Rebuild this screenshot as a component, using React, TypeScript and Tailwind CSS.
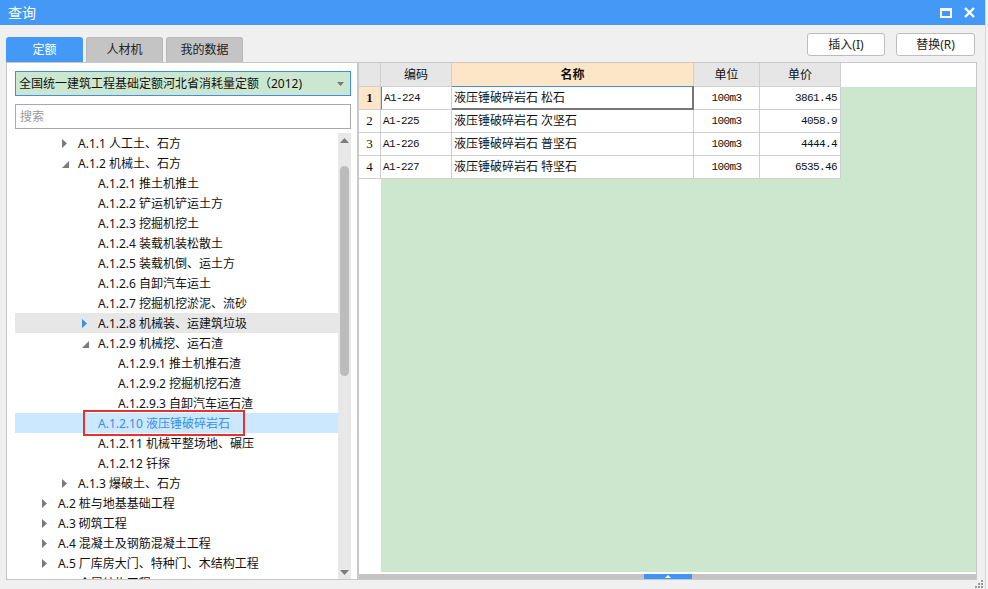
import React from "react";

type Node = { lvl: 1 | 2 | 3 | 4; arrow: "" | "c" | "e"; text: string; hover?: boolean; sel?: boolean };

const tree: Node[] = [
  { lvl: 2, arrow: "c", text: "A.1.1 人工土、石方" },
  { lvl: 2, arrow: "e", text: "A.1.2 机械土、石方" },
  { lvl: 3, arrow: "", text: "A.1.2.1 推土机推土" },
  { lvl: 3, arrow: "", text: "A.1.2.2 铲运机铲运土方" },
  { lvl: 3, arrow: "", text: "A.1.2.3 挖掘机挖土" },
  { lvl: 3, arrow: "", text: "A.1.2.4 装载机装松散土" },
  { lvl: 3, arrow: "", text: "A.1.2.5 装载机倒、运土方" },
  { lvl: 3, arrow: "", text: "A.1.2.6 自卸汽车运土" },
  { lvl: 3, arrow: "", text: "A.1.2.7 挖掘机挖淤泥、流砂" },
  { lvl: 3, arrow: "c", text: "A.1.2.8 机械装、运建筑垃圾", hover: true },
  { lvl: 3, arrow: "e", text: "A.1.2.9 机械挖、运石渣" },
  { lvl: 4, arrow: "", text: "A.1.2.9.1 推土机推石渣" },
  { lvl: 4, arrow: "", text: "A.1.2.9.2 挖掘机挖石渣" },
  { lvl: 4, arrow: "", text: "A.1.2.9.3 自卸汽车运石渣" },
  { lvl: 3, arrow: "", text: "A.1.2.10 液压锤破碎岩石", sel: true },
  { lvl: 3, arrow: "", text: "A.1.2.11 机械平整场地、碾压" },
  { lvl: 3, arrow: "", text: "A.1.2.12 钎探" },
  { lvl: 2, arrow: "c", text: "A.1.3 爆破土、石方" },
  { lvl: 1, arrow: "c", text: "A.2 桩与地基基础工程" },
  { lvl: 1, arrow: "c", text: "A.3 砌筑工程" },
  { lvl: 1, arrow: "c", text: "A.4 混凝土及钢筋混凝土工程" },
  { lvl: 1, arrow: "c", text: "A.5 厂库房大门、特种门、木结构工程" },
  { lvl: 1, arrow: "c", text: "A.6 金属结构工程" },
];

const indent: Record<number, string> = {
  1: "pl-[27px]",
  2: "pl-[47px]",
  3: "pl-[67px]",
  4: "pl-[87px]",
};

const rows = [
  { code: "A1-224", name: "液压锤破碎岩石 松石", unit: "100m3", price: "3861.45" },
  { code: "A1-225", name: "液压锤破碎岩石 次坚石", unit: "100m3", price: "4058.9" },
  { code: "A1-226", name: "液压锤破碎岩石 普坚石", unit: "100m3", price: "4444.4" },
  { code: "A1-227", name: "液压锤破碎岩石 特坚石", unit: "100m3", price: "6535.46" },
];

function Arrow({ kind, blue }: { kind: "" | "c" | "e"; blue?: boolean }) {
  return (
    <div className="w-[16px] h-full flex items-center">
      {kind === "c" && (
        <svg width="5" height="9" viewBox="0 0 5 9">
          <path d="M0 0 L5 4.5 L0 9 Z" fill={blue ? "#3a8ee6" : "#7b7b7b"} />
        </svg>
      )}
      {kind === "e" && (
        <svg width="7" height="7" viewBox="0 0 7 7" className="mt-[2px]">
          <path d="M7 0 L7 7 L0 7 Z" fill="#7b7b7b" />
        </svg>
      )}
    </div>
  );
}

const mono = "font-['Liberation_Mono','DejaVu_Sans_Mono',monospace] text-[11px] tracking-[-0.6px]";

export default function App() {
  return (
    <div className="w-[988px] h-[589px] bg-[#f0f0f0] flex overflow-hidden font-['Noto_Sans','Noto_Sans_CJK_SC',sans-serif] text-[#111]">
      <div className="w-[985px] h-full flex flex-col">
        {/* title bar */}
        <div className="h-[25px] bg-[#4499f7] flex items-center pl-[8px] pr-[10px]">
          <span className="text-white text-[14px] leading-none">查询</span>
          <div className="ml-auto flex items-center gap-[12px]">
            <svg width="12" height="10" viewBox="0 0 12 10">
              <rect x="1" y="1.5" width="10" height="7.5" fill="none" stroke="white" strokeWidth="2" />
              <rect x="0" y="0" width="12" height="3" fill="white" />
            </svg>
            <svg width="11" height="11" viewBox="0 0 11 11">
              <path d="M1 1 L10 10 M10 1 L1 10" stroke="white" strokeWidth="2.4" />
            </svg>
          </div>
        </div>

        {/* tabs + buttons */}
        <div className="h-[37px] flex">
          <div className="ml-[6px] flex items-end gap-[3px]">
            <div className="w-[77px] h-[25px] bg-[#4499f7] rounded-t-[3px] flex items-center justify-center text-white text-[12px]">定额</div>
            <div className="w-[77px] h-[25px] bg-[#c4c4c4] border border-[#b8b8b8] border-b-0 rounded-t-[3px] flex items-center justify-center text-[12px] text-[#222]">人材机</div>
            <div className="w-[77px] h-[25px] bg-[#c4c4c4] border border-[#b8b8b8] border-b-0 rounded-t-[3px] flex items-center justify-center text-[12px] text-[#222]">我的数据</div>
          </div>
          <div className="ml-auto mr-[10px] mt-[8px] flex gap-[11px] self-start">
            <div className="w-[78px] h-[23px] bg-white border border-[#bdbdbd] rounded-[3px] flex items-center justify-center text-[12px] text-[#222]">插入(I)</div>
            <div className="w-[79px] h-[23px] bg-white border border-[#bdbdbd] rounded-[3px] flex items-center justify-center text-[12px] text-[#222]">替换(R)</div>
          </div>
        </div>

        {/* panels */}
        <div className="h-[518px] flex">
          {/* left panel */}
          <div className="ml-[6px] w-[352px] h-full bg-white border border-[#c8c8c8] flex flex-col pl-[8px] pr-[6px] pt-[8px]">
            <div className="h-[25px] border border-[#3f8fe9] bg-[#cce7cf] flex items-center pl-[3px] pr-[6px]">
              <span className="text-[12px] whitespace-nowrap">全国统一建筑工程基础定额河北省消耗量定额（2012)</span>
              <svg width="7" height="4" viewBox="0 0 7 4" className="ml-auto">
                <path d="M0 0 L7 0 L3.5 4 Z" fill="#777" />
              </svg>
            </div>
            <div className="mt-[8px] h-[25px] border border-[#a9a9a9] flex items-center pl-[4px]">
              <span className="text-[12px] text-[#9a9a9a]">搜索</span>
            </div>
            <div className="mt-[4px] flex-1 flex min-h-0 overflow-hidden">
              <div className="flex-1 min-w-0">
                {tree.map((n, i) => (
                  <div
                    key={i}
                    className={`relative h-[20px] flex items-center whitespace-nowrap text-[12px] ${indent[n.lvl]} ${
                      n.hover ? "bg-[#e7e7e7]" : n.sel ? "bg-[#cce8ff] text-[#3a8ee6]" : ""
                    }`}
                  >
                    <Arrow kind={n.arrow} blue={n.hover} />
                    <span className="pt-[2px]">{n.text}</span>
                    {n.sel && (
                      <div className="absolute left-[68px] top-[-3px] w-[162px] h-[26px] border-2 border-[#e8302f]" />
                    )}
                  </div>
                ))}
              </div>
              <div className="w-[13px] bg-[#e8e8e8] flex flex-col items-center relative">
                <svg width="9" height="5" viewBox="0 0 9 5" className="mt-[5px]">
                  <path d="M0 5 L4.5 0 L9 5 Z" fill="#7b7b7b" />
                </svg>
                <div className="mt-[23px] w-[9px] h-[210px] rounded-full bg-[#bcbcbc]" />
                <svg width="9" height="5" viewBox="0 0 9 5" className="mt-auto mb-[4px]">
                  <path d="M0 0 L9 0 L4.5 5 Z" fill="#7b7b7b" />
                </svg>
              </div>
            </div>
          </div>

          {/* grid */}
          <div className="w-[619px] h-full bg-white border border-[#c8c8c8] flex flex-col">
            <div className="h-[24px] flex text-[12px]">
              <div className="w-[22px] bg-[#e6e6e6] border-r border-b border-[#cfcfcf]" />
              <div className="w-[71px] bg-[#e6e6e6] border-r border-b border-[#cfcfcf] flex items-center justify-center">编码</div>
              <div className="w-[242px] bg-[#fde6c8] border-r border-b border-[#cfcfcf] flex items-center justify-center font-bold">名称</div>
              <div className="w-[66px] bg-[#e6e6e6] border-r border-b border-[#cfcfcf] flex items-center justify-center">单位</div>
              <div className="w-[81px] bg-[#e6e6e6] border-r border-b border-[#cfcfcf] flex items-center justify-center">单价</div>
              <div className="flex-1 bg-white" />
            </div>
            <div className="flex-1 flex min-h-0">
              <div className="w-[22px] bg-white flex flex-col font-['Liberation_Serif',serif] text-[13px]">
                {rows.map((_, i) => (
                  <div
                    key={i}
                    className={`h-[23px] border-r border-b border-[#cfcfcf] flex items-center justify-center ${
                      i === 0 ? "bg-[#fde6c8] font-bold" : ""
                    }`}
                  >
                    {i + 1}
                  </div>
                ))}
              </div>
              <div className="flex-1 bg-[#cde7cf] flex flex-col">
                {rows.map((r, i) => (
                  <div key={i} className="h-[23px] flex">
                    <div
                      className={`w-[71px] bg-white border-r border-b border-[#cfcfcf] flex items-center pl-[2px] ${mono} ${
                        i === 0 ? "border-l border-l-[#3f8fe9]" : ""
                      }`}
                    >
                      {r.code}
                    </div>
                    <div
                      className={`w-[242px] bg-white flex items-center pl-[2px] text-[12px] whitespace-nowrap ${
                        i === 0
                          ? "border-t border-t-[#3f8fe9] border-r-2 border-b-2 border-r-[#777] border-b-[#777] mt-[-1px] h-[24px]"
                          : "border-r border-b border-[#cfcfcf]"
                      }`}
                    >
                      {r.name}
                    </div>
                    <div className={`w-[66px] bg-white border-r border-b border-[#cfcfcf] flex items-center justify-center ${mono}`}>
                      {r.unit}
                    </div>
                    <div className={`w-[81px] bg-white border-r border-b border-[#cfcfcf] flex items-center justify-end pr-[3px] ${mono}`}>
                      {r.price}
                    </div>
                  </div>
                ))}
              </div>
            </div>
            <div className="h-[2px] bg-white" />
            <div className="h-[5px] bg-[#c3c3c3] flex">
              <div className="ml-[285px] w-[48px] h-full bg-[#3f95f5] flex items-center justify-center">
                <svg width="6" height="3" viewBox="0 0 6 3">
                  <path d="M0 3 L3 0 L6 3 Z" fill="white" />
                </svg>
              </div>
            </div>
          </div>
        </div>

        {/* bottom */}
        <div className="flex-1 relative">
          <div className="absolute right-[2px] bottom-[1px] grid grid-cols-3 gap-[1px]">
            <div className="w-[2px] h-[2px]" />
            <div className="w-[2px] h-[2px]" />
            <div className="w-[2px] h-[2px] bg-[#999]" />
            <div className="w-[2px] h-[2px]" />
            <div className="w-[2px] h-[2px] bg-[#999]" />
            <div className="w-[2px] h-[2px] bg-[#999]" />
            <div className="w-[2px] h-[2px] bg-[#999]" />
            <div className="w-[2px] h-[2px] bg-[#999]" />
            <div className="w-[2px] h-[2px] bg-[#999]" />
          </div>
        </div>
      </div>
      <div className="w-[3px] h-full border-l border-[#d6d6d6] bg-[#f5f5f5]" />
    </div>
  );
}
